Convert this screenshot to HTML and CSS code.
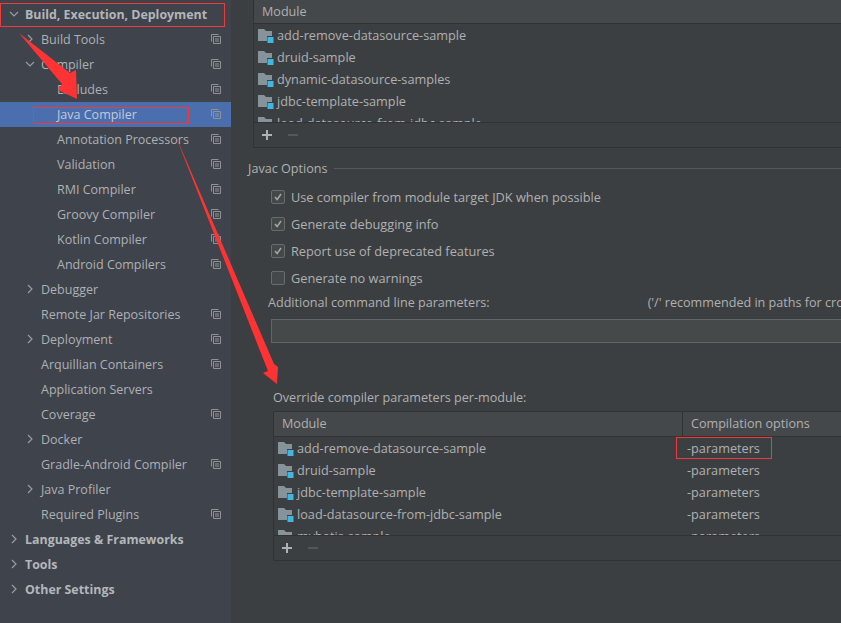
FILE: index.html
```html
<!DOCTYPE html>
<html lang="en">
<head>
  <meta charset="UTF-8" />
  <title>Settings - Java Compiler</title>
  <link rel="stylesheet" href="styles.css">
</head>
<body>
  <svg width="0" height="0" class="defs">
    <symbol id="copy" viewBox="0 0 10 10">
      <path d="M.5 7.5V.5h7" fill="none" stroke="#8f9396"/>
      <path d="M2.5 2.5h7v7h-7zM4 5h4M4 7h4" fill="none" stroke="#8f9396"/>
    </symbol>
    <symbol id="closed" viewBox="0 0 10 10">
      <path d="M3 1l4 4-4 4" fill="none" stroke="#9a9da0" stroke-width="1.2"/>
    </symbol>
    <symbol id="open" viewBox="0 0 10 10">
      <path d="M1 3l4 4 4-4" fill="none" stroke="#9a9da0" stroke-width="1.2"/>
    </symbol>
    <symbol id="module" viewBox="0 0 16 16">
      <path d="M0 2h6l2 2h6v10H0z" fill="#87939a"/>
      <path d="M9 9h7v7H9z" fill="#3c3f41"/>
      <path d="M9.500 10h6v6h-6z" fill="#40b6e0"/>
    </symbol>
    <symbol id="tick" viewBox="0 0 14 14">
      <path d="M3.5 7l2.500 3 4.500-6.500" fill="none" stroke="#a7a7a7" stroke-width="1.800"/>
    </symbol>
    <symbol id="plus" viewBox="0 0 10 10">
      <path d="M4 0h2v4h4v2H6v4H4V6H0V4h4z" fill="#afb1b3"/>
    </symbol>
    <symbol id="minus" viewBox="0 0 10 10">
      <path d="M0 4h10v2H0z" fill="#55585a"/>
    </symbol>
  </svg>

  <div class="window">
    <nav class="tree">
      <div class="row top"><svg class="arrow"><use href="#open"/></svg>Build, Execution, Deployment</div>
      <div class="row lvl1"><svg class="arrow"><use href="#closed"/></svg><span class="name">Build Tools</span><svg class="copy"><use href="#copy"/></svg></div>
      <div class="row lvl1"><svg class="arrow"><use href="#open"/></svg><span class="name">Compiler</span><svg class="copy"><use href="#copy"/></svg></div>
      <div class="row lvl2"><span class="name">Excludes</span><svg class="copy"><use href="#copy"/></svg></div>
      <div class="row lvl2 selected"><span class="name">Java Compiler</span><svg class="copy"><use href="#copy"/></svg></div>
      <div class="row lvl2"><span class="name">Annotation Processors</span><svg class="copy"><use href="#copy"/></svg></div>
      <div class="row lvl2"><span class="name">Validation</span><svg class="copy"><use href="#copy"/></svg></div>
      <div class="row lvl2"><span class="name">RMI Compiler</span><svg class="copy"><use href="#copy"/></svg></div>
      <div class="row lvl2"><span class="name">Groovy Compiler</span><svg class="copy"><use href="#copy"/></svg></div>
      <div class="row lvl2"><span class="name">Kotlin Compiler</span><svg class="copy"><use href="#copy"/></svg></div>
      <div class="row lvl2"><span class="name">Android Compilers</span><svg class="copy"><use href="#copy"/></svg></div>
      <div class="row lvl1"><svg class="arrow"><use href="#closed"/></svg><span class="name">Debugger</span></div>
      <div class="row lvl1 leaf"><span class="name">Remote Jar Repositories</span><svg class="copy"><use href="#copy"/></svg></div>
      <div class="row lvl1"><svg class="arrow"><use href="#closed"/></svg><span class="name">Deployment</span><svg class="copy"><use href="#copy"/></svg></div>
      <div class="row lvl1 leaf"><span class="name">Arquillian Containers</span><svg class="copy"><use href="#copy"/></svg></div>
      <div class="row lvl1 leaf"><span class="name">Application Servers</span></div>
      <div class="row lvl1 leaf"><span class="name">Coverage</span><svg class="copy"><use href="#copy"/></svg></div>
      <div class="row lvl1"><svg class="arrow"><use href="#closed"/></svg><span class="name">Docker</span></div>
      <div class="row lvl1 leaf"><span class="name">Gradle-Android Compiler</span><svg class="copy"><use href="#copy"/></svg></div>
      <div class="row lvl1"><svg class="arrow"><use href="#closed"/></svg><span class="name">Java Profiler</span></div>
      <div class="row lvl1 leaf"><span class="name">Required Plugins</span><svg class="copy"><use href="#copy"/></svg></div>
      <div class="row top"><svg class="arrow"><use href="#closed"/></svg>Languages &amp; Frameworks</div>
      <div class="row top"><svg class="arrow"><use href="#closed"/></svg>Tools</div>
      <div class="row top"><svg class="arrow"><use href="#closed"/></svg>Other Settings</div>
    </nav>

    <main class="content">
      <section class="table table-top">
        <div class="thead"><div class="th">Module</div></div>
        <div class="tbody">
          <div class="tr"><svg class="mod"><use href="#module"/></svg>add-remove-datasource-sample</div>
          <div class="tr"><svg class="mod"><use href="#module"/></svg>druid-sample</div>
          <div class="tr"><svg class="mod"><use href="#module"/></svg>dynamic-datasource-samples</div>
          <div class="tr"><svg class="mod"><use href="#module"/></svg>jdbc-template-sample</div>
          <div class="tr"><svg class="mod"><use href="#module"/></svg>load-datasource-from-jdbc-sample</div>
        </div>
        <div class="tools"><svg><use href="#plus"/></svg><svg><use href="#minus"/></svg></div>
      </section>

      <div class="group-title"><span>Javac Options</span><i></i></div>

      <div class="check on"><span class="box"><svg><use href="#tick"/></svg></span>Use compiler from module target JDK when possible</div>
      <div class="check on"><span class="box"><svg><use href="#tick"/></svg></span>Generate debugging info</div>
      <div class="check on"><span class="box"><svg><use href="#tick"/></svg></span>Report use of deprecated features</div>
      <div class="check"><span class="box"></span>Generate no warnings</div>

      <div class="params-label"><span>Additional command line parameters:</span><span class="hint">('/' recommended in paths for cross-platform configurations)</span></div>
      <div class="params-input"></div>

      <div class="override-label">Override compiler parameters per-module:</div>
      <section class="table table-bottom">
        <div class="thead"><div class="th col-a">Module</div><div class="th col-b">Compilation options</div></div>
        <div class="tbody">
          <div class="tr"><div class="col-a"><svg class="mod"><use href="#module"/></svg>add-remove-datasource-sample</div><div class="col-b">-parameters</div></div>
          <div class="tr"><div class="col-a"><svg class="mod"><use href="#module"/></svg>druid-sample</div><div class="col-b">-parameters</div></div>
          <div class="tr"><div class="col-a"><svg class="mod"><use href="#module"/></svg>jdbc-template-sample</div><div class="col-b">-parameters</div></div>
          <div class="tr"><div class="col-a"><svg class="mod"><use href="#module"/></svg>load-datasource-from-jdbc-sample</div><div class="col-b">-parameters</div></div>
          <div class="tr"><div class="col-a"><svg class="mod"><use href="#module"/></svg>mybatis-sample</div><div class="col-b">-parameters</div></div>
        </div>
        <div class="tools"><svg><use href="#plus"/></svg><svg><use href="#minus"/></svg></div>
      </section>
    </main>

    <!-- red markup drawn over the screenshot -->
    <svg class="markup" width="841" height="623" viewBox="0 0 841 623">
      <rect x="0.500" y="3.500" width="224" height="23" fill="none" stroke="#f03a3a"/>
      <rect x="33.500" y="107.500" width="155" height="16" fill="none" stroke="#f03a3a"/>
      <rect x="676.500" y="437.500" width="95" height="21" fill="none" stroke="#f03a3a"/>
      <path d="M19 33L70 73L76 70L77 99L58 90L62 84z" fill="#ff3333"/>
      <path d="M174 132L274 364L278 367L277 384L263 373L268 371z" fill="#ff3333"/>
    </svg>
  </div>
</body>
</html>
```

FILE: styles.css
```css
* {
  box-sizing: border-box;
}

html, body {
  margin: 0;
  padding: 0;
}

body {
  width: 841px;
  height: 623px;
  overflow: hidden;
  font-family: 'Open Sans', 'Noto Sans', sans-serif;
  font-size: 12.500px;
  color: #afb1b3;
  background: #3c3f41;
}

.defs {
  position: absolute;
}

.window {
  position: relative;
  display: flex;
  width: 841px;
  height: 623px;
}

/* left tree */
.tree {
  width: 231px;
  flex: none;
  padding-top: 2px;
  background: #3e434c;
}

.row {
  display: flex;
  align-items: center;
  height: 25px;
  padding-bottom: 1px;
  white-space: nowrap;
}

.row .name {
  flex: 1;
}

.arrow {
  width: 10px;
  height: 10px;
  flex: none;
}

.copy {
  width: 10px;
  height: 10px;
  flex: none;
  margin-right: 10px;
}

.row.top {
  padding-left: 9px;
  font-size: 12.400px;
  font-weight: 700;
  color: #b4b7b9;
}

.row.top .arrow {
  margin-right: 6px;
}

.row.lvl1 {
  padding-left: 25px;
}

.row.lvl1 .arrow {
  margin-right: 6px;
}

.row.lvl1.leaf {
  padding-left: 41px;
}

.row.lvl2 {
  padding-left: 57px;
}

.row.selected {
  background: #4b6eaf;
  color: #c3cad6;
}

/* right pane */
.content {
  flex: 1;
  min-width: 0;
  overflow: hidden;
  font-size: 12.600px;
}

.table {
  border: 1px solid #323232;
  border-right: 0;
}

.table-top {
  margin-left: 22px;
  height: 148px;
  border-top: 0;
}

.table-bottom {
  margin: 3px 0 0 42px;
  height: 150px;
}

.thead {
  display: flex;
  height: 24px;
  background: #45484a;
  border-bottom: 1px solid #323232;
}

.th {
  padding-left: 8px;
  line-height: 23px;
}

.tbody {
  height: 98px;
  overflow: hidden;
}

.tr {
  display: flex;
  align-items: center;
  height: 22px;
  white-space: nowrap;
  padding-left: 4px;
  font-size: 12.700px;
}

.mod {
  width: 16px;
  height: 16px;
  flex: none;
  margin-right: 3px;
}

.tools {
  display: flex;
  align-items: center;
  height: 25px;
  border-top: 1px solid #323232;
  padding-left: 8px;
  gap: 16px;
}

.tools svg {
  width: 10px;
  height: 10px;
}

.group-title {
  display: flex;
  align-items: center;
  gap: 7px;
  margin: 10px 0 0 17px;
  height: 20px;
}

.group-title i {
  flex: 1;
  height: 1px;
  background: #55585a;
}

.check {
  display: flex;
  align-items: center;
  height: 27px;
  margin-left: 40px;
  gap: 6px;
  white-space: nowrap;
  font-size: 12.750px;
}

.group-title + .check {
  margin-top: 5px;
}

.box {
  width: 14px;
  height: 14px;
  flex: none;
  border: 1px solid #6b6b6b;
  border-radius: 2px;
  background: #43494a;
}

.box svg {
  display: block;
  width: 12px;
  height: 12px;
}

.params-label {
  display: flex;
  margin: 2px 0 0 37px;
  height: 20px;
  line-height: 20px;
  white-space: nowrap;
}

.hint {
  margin-left: 158px;
}

.params-input {
  margin: 6px 0 0 40px;
  height: 24px;
  background: #45494a;
  border: 1px solid #646464;
  border-right: 0;
}

.override-label {
  margin: 45px 0 0 42px;
  height: 20px;
  line-height: 20px;
}

.table-bottom .thead {
  height: 25px;
}

.table-bottom .th {
  line-height: 24px;
}

.table-bottom .tr {
  padding-left: 0;
}

.table-bottom .col-a {
  display: flex;
  align-items: center;
  width: 409px;
  padding-left: 4px;
  flex: none;
}

.table-bottom .th.col-a {
  padding-left: 8px;
  border-right: 1px solid #323232;
}

.table-bottom .col-b {
  padding-left: 4px;
}

.table-bottom .th.col-b {
  padding-left: 8px;
}

/* annotations on top of the screenshot */
.markup {
  position: absolute;
  left: 0;
  top: 0;
  pointer-events: none;
}
```
